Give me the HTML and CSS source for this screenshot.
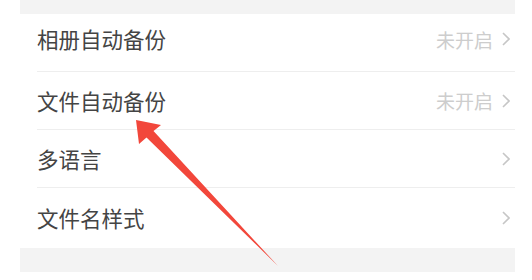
FILE: index.html
```html
<!DOCTYPE html>
<html lang="zh-CN">
<head>
<meta charset="utf-8">
<link rel="stylesheet" href="styles.css">
</head>
<body>
<div class="panel">
  <div class="band band-top"></div>
  <ul class="list">
    <li class="row first"><span class="label">相册自动备份</span><span class="value">未开启<svg class="chev" viewBox="0 0 8 14" width="8" height="14"><polyline points="1,1 7,7 1,13"/></svg></span></li>
    <li class="row"><span class="label">文件自动备份</span><span class="value">未开启<svg class="chev" viewBox="0 0 8 14" width="8" height="14"><polyline points="1,1 7,7 1,13"/></svg></span></li>
    <li class="row"><span class="label">多语言</span><span class="value"><svg class="chev" viewBox="0 0 8 14" width="8" height="14"><polyline points="1,1 7,7 1,13"/></svg></span></li>
    <li class="row last"><span class="label">文件名样式</span><span class="value"><svg class="chev" viewBox="0 0 8 14" width="8" height="14"><polyline points="1,1 7,7 1,13"/></svg></span></li>
  </ul>
  <div class="band band-bottom"></div>
</div>
<svg class="arrow" viewBox="0 0 532 280" width="532" height="280">
  <polygon points="136,120 161,125 153.5,131 278,266 146.5,137.5 139,144" />
</svg>
</body>
</html>
```
FILE: styles.css
```css
html, body {
  margin: 0;
  padding: 0;
  background: #ffffff;
  width: 532px;
  height: 280px;
  overflow: hidden;
  font-family: "Noto Sans CJK SC", "Noto Sans", sans-serif;
}
.panel {
  margin-left: 20px;
  width: 495px;
  display: flex;
  flex-direction: column;
}
.band {
  background: #f3f3f3;
}
.band-top {
  height: 14px;
}
.band-bottom {
  height: 24px;
}
.list {
  list-style: none;
  margin: 0;
  padding: 0 0 0 17px;
}
.row {
  height: 58px;
  box-sizing: border-box;
  border-bottom: 1px solid #eeeeee;
  display: flex;
  align-items: center;
  justify-content: space-between;
  padding-right: 5px;
}
.row.first {
  padding-bottom: 7px;
}
.row.last {
  border-bottom: none;
  height: 60px;
}
.label {
  font-size: 21.5px;
  color: #444444;
  line-height: 1;
}
.value {
  display: flex;
  align-items: center;
  gap: 9px;
  font-size: 19px;
  color: #cdcdcd;
  line-height: 1;
}
.chev polyline {
  fill: none;
  stroke: #c6c6c6;
  stroke-width: 1.6;
}
.arrow {
  position: absolute;
  left: 0;
  top: 0;
  pointer-events: none;
}
.arrow polygon {
  fill: #f2473b;
}
```
